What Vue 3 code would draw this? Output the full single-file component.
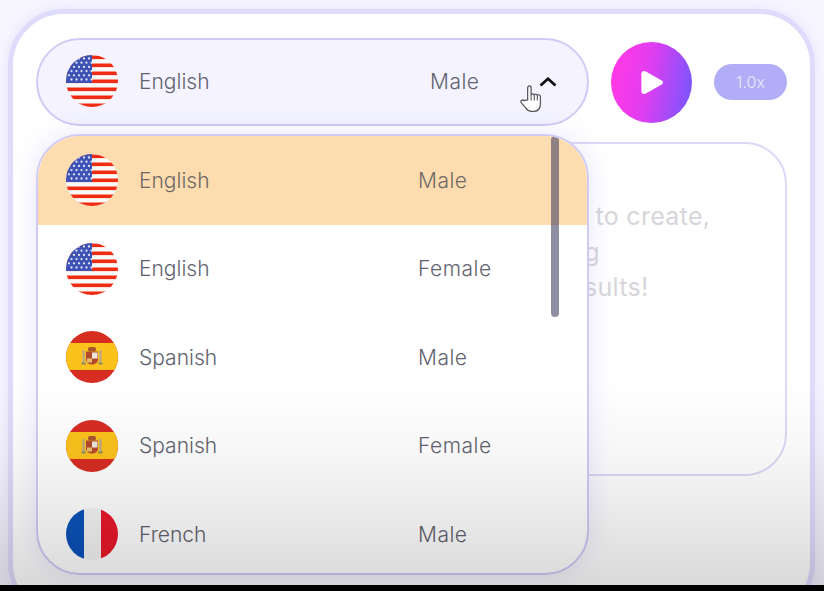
<script setup>
const voices = [
  { id: 1, lang: 'English', gender: 'Male', flag: 'us', active: true },
  { id: 2, lang: 'English', gender: 'Female', flag: 'us' },
  { id: 3, lang: 'Spanish', gender: 'Male', flag: 'es' },
  { id: 4, lang: 'Spanish', gender: 'Female', flag: 'es' },
  { id: 5, lang: 'French', gender: 'Male', flag: 'fr' }
]

// star dots for the US canton
const stars = []
for (let r = 0; r < 6; r++) {
  for (let c = 0; c < 5; c++) {
    stars.push({ x: 3 + c * 5 + (r % 2 ? 2.5 : 0), y: 3.5 + r * 4.2 })
  }
}
const stripes = [0, 2, 4, 6, 8, 10, 12]
</script>

<template>
  <div class="page">
    <div class="stage">
      <div class="card">
        <div class="top-row">
          <div class="select">
            <svg class="flag" viewBox="0 0 52 52">
              <rect width="52" height="52" fill="#fafafa" />
              <rect v-for="s in stripes" :key="s" x="0" :y="s * 4 + 0.5" width="52" height="3.6" fill="#f02c12" />
              <rect width="26" height="28" fill="#3d52b4" />
              <circle v-for="(d, i) in stars" :key="i" :cx="d.x" :cy="d.y" r="1.15" fill="#dfe3f8" />
            </svg>
            <span class="name name-top">English</span>
            <span class="gender">Male</span>
            <svg class="chevron" viewBox="0 0 18 10"><path d="M1.5 8.500 9 1.800l7.500 6.700" fill="none" stroke="#111" stroke-width="2.800" /></svg>
            <svg class="hand" viewBox="0 0 24 30">
              <path d="M8 16V3.600c0-3 3.600-3 3.600 0V11c0-2 3.300-2 3.300.2 0-1.800 3.200-1.800 3.200.4 0-1.600 3.200-1.400 3.200.8v7.200c0 4.400-1.800 8.200-6.800 8.200h-2.500c-3 0-4.500-1.400-6-3.600L1.400 19c-1.400-2.200 1.300-3.900 3-2.200z" fill="#fff" stroke="#55555c" stroke-width="1.300" stroke-linejoin="round" />
              <path d="M11.600 11v5.500M14.900 11.200v5.300M18.100 11.600v4.900" stroke="#55555c" stroke-width="1.100" fill="none" />
            </svg>
          </div>
          <button class="play">
            <svg viewBox="0 0 24 24" width="27" height="27"><path d="M3 4.500C3 2 5 1.100 7 2.200l14 8c1.700 1 1.700 2.600 0 3.600l-14 8c-2 1.100-4 .2-4-2.300z" fill="#fff" /></svg>
          </button>
          <div class="speed">1.0x</div>
        </div>

        <div class="script-box">
          <p>a video to create,</p>
          <p>bringing</p>
          <p>best results!</p>
        </div>

        <!-- open dropdown, lies over the script box -->
        <div class="dropdown">
          <div v-for="v in voices" :key="v.id" class="row" :class="{ active: v.active }">
            <svg class="flag" viewBox="0 0 52 52">
              <template v-if="v.flag === 'us'">
                <rect width="52" height="52" fill="#fafafa" />
                <rect v-for="s in stripes" :key="s" x="0" :y="s * 4 + 0.5" width="52" height="3.6" fill="#f02c12" />
                <rect width="26" height="28" fill="#3d52b4" />
                <circle v-for="(d, i) in stars" :key="i" :cx="d.x" :cy="d.y" r="1.15" fill="#dfe3f8" />
              </template>
              <template v-else-if="v.flag === 'es'">
                <rect width="52" height="52" fill="#d62c22" />
                <rect y="12" width="52" height="27" fill="#fbc21c" />
                <rect x="16.500" y="19" width="2.200" height="13" fill="#b8a68e" />
                <rect x="33.300" y="19" width="2.200" height="13" fill="#b8a68e" />
                <rect x="15.500" y="31.500" width="4.200" height="2" fill="#8b8a5a" />
                <rect x="32.300" y="31.500" width="4.200" height="2" fill="#8b8a5a" />
                <path d="M20 20.500h12v8c0 3-3 5-6 5s-6-2-6-5z" fill="#b5482c" />
                <rect x="26" y="21.500" width="5.500" height="6" fill="#ece6dc" />
                <rect x="21" y="27.500" width="5" height="4" fill="#e2c06a" />
                <rect x="22" y="16" width="8" height="4.500" rx="2" fill="#a8552f" />
              </template>
              <template v-else>
                <rect width="18" height="52" fill="#0a52b8" />
                <rect x="18" width="17" height="52" fill="#f4f4f4" />
                <rect x="35" width="17" height="52" fill="#e8182a" />
              </template>
            </svg>
            <span class="name">{{ v.lang }}</span>
            <span class="gender">{{ v.gender }}</span>
          </div>
          <div class="scrollbar"></div>
        </div>
      </div>
      <div class="fade"></div>
    </div>
    <div class="bottom-bar"></div>
  </div>
</template>

<style>
html, body { margin: 0; background: #000; }
</style>

<style scoped>
.page {
  width: 824px;
  height: 591px;
  overflow: hidden;
  display: flex;
  flex-direction: column;
  font-family: Inter, "Open Sans", sans-serif;
}

.stage {
  position: relative;
  height: 585px;
  flex: none;
  overflow: hidden;
  background: #f7f6ff;
  padding: 9px 9px 0 8px;
  box-sizing: border-box;
}

.bottom-bar {
  flex: 1;
  background: #000;
}

.card {
  position: relative;
  height: 610px;
  box-sizing: border-box;
  padding: 24px 23px;
  background: #fff;
  border: 5px solid #dedbfb;
  border-radius: 56px;
  box-shadow: 0 0 14px rgba(190, 185, 250, 0.3);
}

.top-row {
  display: flex;
  align-items: center;
  gap: 22px;
}

.select {
  position: relative;
  width: 553px;
  height: 88px;
  flex: none;
  box-sizing: border-box;
  display: flex;
  align-items: center;
  padding: 0 0 2px 28px;
  background: #f4f3ff;
  border: 2px solid #cfcbf5;
  border-radius: 44px;
}

.flag {
  width: 52px;
  height: 52px;
  flex: none;
  border-radius: 50%;
  margin-right: 21px;
}

.name {
  width: 279px;
  flex: none;
  font-size: 21px;
  font-weight: 300;
  color: #62626f;
}

.name-top {
  width: 291px;
}

.gender {
  font-size: 21px;
  font-weight: 300;
  letter-spacing: 0.5px;
  color: #62626f;
}

.chevron {
  position: absolute;
  left: 501px;
  top: 37px;
  width: 18px;
  height: 10px;
}

.hand {
  position: absolute;
  left: 482px;
  top: 44px;
  width: 23px;
  height: 30px;
}

.play {
  width: 81px;
  height: 81px;
  flex: none;
  border: none;
  padding: 0;
  border-radius: 50%;
  display: flex;
  align-items: center;
  justify-content: center;
  background: linear-gradient(100deg, #ff39e6 8%, #e13df0 45%, #6f58ff 100%);
}

.speed {
  width: 73px;
  height: 36px;
  line-height: 36px;
  flex: none;
  text-align: center;
  border-radius: 18px;
  background: #b1adf6;
  color: #eceafe;
  font-size: 16px;
  font-weight: 300;
}

.script-box {
  width: 300px;
  height: 334px;
  box-sizing: border-box;
  margin: 16px 0 0 auto;
  padding: 55px 0 0 11px;
  border: 2px solid #dcd9f8;
  border-radius: 42px;
  color: #d6d6da;
  font-size: 25px;
  letter-spacing: 0.3px;
  line-height: 35.5px;
  white-space: nowrap;
}

.script-box p {
  margin: 0;
}

.dropdown {
  position: absolute;
  left: 23px;
  top: 120px;
  width: 553px;
  height: 441px;
  box-sizing: border-box;
  overflow: hidden;
  background: #fff;
  border: 2px solid #cfcbf5;
  border-radius: 44px;
  box-shadow: 0 0 26px rgba(170, 165, 240, 0.28);
}

.row {
  height: 88.5px;
  box-sizing: border-box;
  display: flex;
  align-items: center;
  padding-left: 28px;
}

.row.active {
  background: #fddcb0;
}

.row.active .name,
.row.active .gender {
  color: #6f6864;
}

.scrollbar {
  position: absolute;
  top: 0;
  left: 513px;
  width: 8px;
  height: 181px;
  border-radius: 4px;
  background: rgba(70, 68, 100, 0.6);
}

.fade {
  position: absolute;
  left: 0;
  right: 0;
  top: 380px;
  bottom: 0;
  pointer-events: none;
  background: linear-gradient(to bottom, rgba(0, 0, 0, 0), rgba(0, 0, 0, 0.03) 35%, rgba(0, 0, 0, 0.09) 70%, rgba(0, 0, 0, 0.15));
}
</style>
